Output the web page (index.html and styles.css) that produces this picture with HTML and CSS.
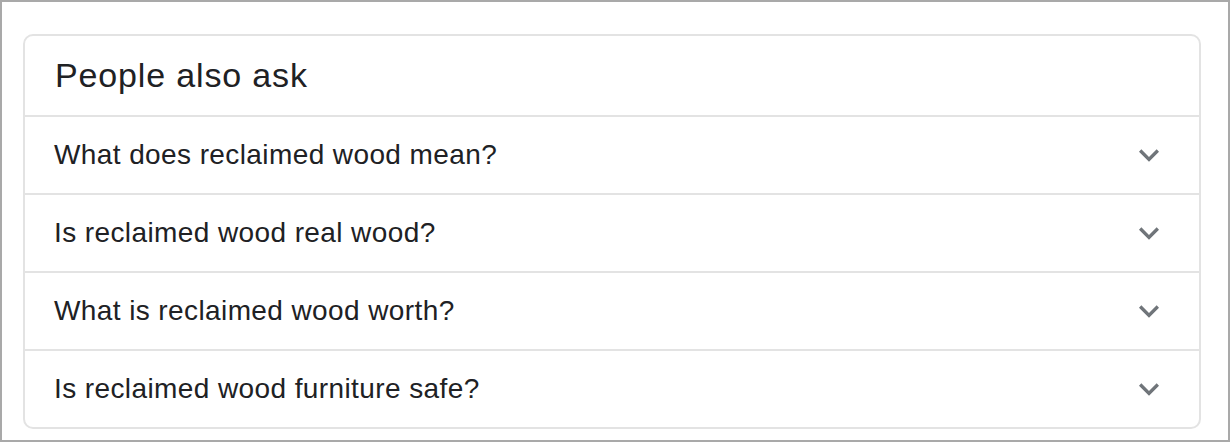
FILE: index.html
```html
<!doctype html>
<html>
<head>
<meta charset="utf-8">
<title>People also ask</title>
<link rel="stylesheet" href="styles.css">
</head>
<body>
<div class="frame">
	<div class="card">
		<h2 class="card-title">People also ask</h2>
		<ul class="questions">
			<li class="question">
				<span>What does reclaimed wood mean?</span>
				<svg class="chevron" viewBox="0 0 24 24"><path d="M16.59 8.59L12 13.17 7.41 8.59 6 10l6 6 6-6z"/></svg>
			</li>
			<li class="question">
				<span>Is reclaimed wood real wood?</span>
				<svg class="chevron" viewBox="0 0 24 24"><path d="M16.59 8.59L12 13.17 7.41 8.59 6 10l6 6 6-6z"/></svg>
			</li>
			<li class="question">
				<span>What is reclaimed wood worth?</span>
				<svg class="chevron" viewBox="0 0 24 24"><path d="M16.59 8.59L12 13.17 7.41 8.59 6 10l6 6 6-6z"/></svg>
			</li>
			<li class="question">
				<span>Is reclaimed wood furniture safe?</span>
				<svg class="chevron" viewBox="0 0 24 24"><path d="M16.59 8.59L12 13.17 7.41 8.59 6 10l6 6 6-6z"/></svg>
			</li>
		</ul>
	</div>
</div>
</body>
</html>
```

FILE: styles.css
```css
*{margin:0; padding:0; list-style:none; box-sizing:border-box;}
html,body{height:100%;}
body{font-family:"Liberation Sans", Arial, sans-serif; color:#202124; background:#fff;}
.frame{height:442px; border:2px solid #a9a9a9; padding:32px 27px 0 21px;}
.card{border:2px solid #e3e3e3; border-radius:10px; overflow:hidden;}
.card-title{height:81px; padding:19px 0 0 30px; font-size:34px; letter-spacing:0.85px; font-weight:normal; line-height:40px; border-bottom:2px solid #e3e3e3;}
.question{height:78px; display:flex; align-items:center; justify-content:space-between; padding:0 30px 0 29px; font-size:28px; letter-spacing:0.4px; border-bottom:2px solid #e3e3e3;}
.question:last-child{height:76px; border-bottom:none;}
.chevron{width:40px; height:40px; fill:#70757a;}
```
